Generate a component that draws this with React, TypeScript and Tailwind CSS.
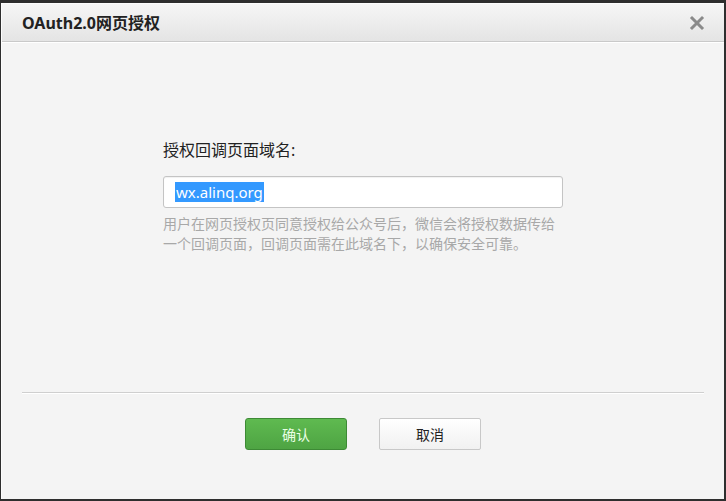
const CJK = '"Noto Sans", "Noto Sans CJK SC", sans-serif';

function CloseIcon() {
  return (
    <svg width="16" height="16" viewBox="0 0 16 16" className="text-[#8a8a8a]">
      <path d="M3 3 L13 13 M13 3 L3 13" stroke="currentColor" strokeWidth="3" strokeLinecap="square" />
    </svg>
  );
}

export default function App() {
  return (
    <div
      className="w-[726px] h-[501px] bg-[#2e2e2e] pt-[3px] pl-px pr-[2px] pb-[2px]"
      style={{ fontFamily: CJK }}
    >
      <div className="h-full flex flex-col bg-[#f4f4f4] border-l border-t border-white/70">
        {/* header */}
        <div className="h-[38px] flex items-center justify-between pl-5 pr-[19px] bg-gradient-to-b from-[#f6f6f6] to-[#e4e4e4] border-b border-[#c9c9c9] shadow-[0_1px_0_#ffffff]">
          <h1 className="text-[16px] font-bold text-[#222] leading-none">OAuth2.0网页授权</h1>
          <button className="flex items-center justify-center">
            <CloseIcon />
          </button>
        </div>

        {/* body */}
        <div className="flex-1 pt-[97px]">
          <div className="w-[400px] mx-auto">
            <label className="block text-[16px] leading-[22px] text-[#222]">授权回调页面域名:</label>
            <div className="mt-[15px] h-[32px] bg-white border border-[#c4c4c4] rounded-[3px] flex items-center pl-[11px] shadow-[inset_0_1px_1px_rgba(0,0,0,0.06)]">
              <span className="bg-[#3399ff] text-white text-[15px] leading-[20px] px-px">wx.alinq.org</span>
            </div>
            <p className="mt-[6px] text-[14px] leading-[20px] text-[#a8a8a8] whitespace-nowrap">
              用户在网页授权页同意授权给公众号后，微信会将授权数据传给
              <br />
              一个回调页面，回调页面需在此域名下，以确保安全可靠。
            </p>
          </div>
        </div>

        {/* footer */}
        <div className="h-[107px] px-5">
          <div className="border-t border-[#cfcfcf] shadow-[0_1px_0_#ffffff]" />
          <div className="flex justify-center gap-8 mt-[25px]">
            <button className="w-[102px] h-[32px] rounded-[3px] border border-[#3d8a35] bg-gradient-to-b from-[#5fba50] to-[#4ea443] text-[14px] text-[#eaffe6]">
              确认
            </button>
            <button className="w-[102px] h-[32px] rounded-[2px] border border-[#c8c8c8] bg-gradient-to-b from-white to-[#f1f1f1] text-[14px] text-[#222]">
              取消
            </button>
          </div>
        </div>
      </div>
    </div>
  );
}
